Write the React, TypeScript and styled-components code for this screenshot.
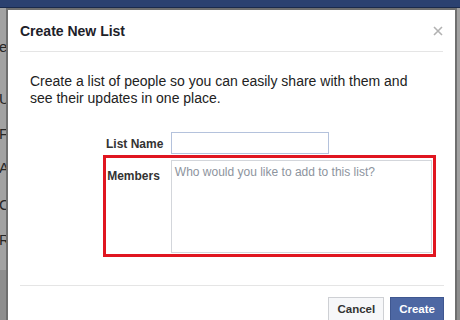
import React from 'react';
import styled, { createGlobalStyle } from 'styled-components';

const GlobalStyle = createGlobalStyle`
	html, body {
		margin: 0;
		padding: 0;
		background: #a2a2a2;
	}
	body {
		font-family: "Liberation Sans", Arial, sans-serif;
	}
`;

const Page = styled.div`
	position: relative;
	width: 460px;
	height: 320px;
	overflow: hidden;
	background: #a2a2a2;
`;

const TopBar = styled.div`
	height: 7px;
	background: #2b4170;
	border-bottom: 1px solid #1a2a4c;
`;

// the page behind the dialog: only the first letters of its menu peek out
const Sidebar = styled.ul`
	list-style: none;
	margin: 0;
	padding: 0;
	width: 7px;
	overflow: hidden;
	display: flex;
	flex-direction: column;
	font-size: 15px;
	color: #262626;
`;

const SideItem = styled.li<{ $offset: number }>`
	margin-top: ${props => props.$offset}px;
	margin-left: -1px;
	line-height: 16px;
	white-space: nowrap;
`;

const SideFooter = styled.div`
	margin-top: 22px;
	height: 60px;
	background: #8e8e8e;
`;

const Dialog = styled.div`
	position: absolute;
	left: 6px;
	top: 8px;
	width: 447px;
	height: 330px;
	background: #fff;
	border: 2px solid #6f6f6f;
	border-bottom: none;
	display: flex;
	flex-direction: column;
`;

const Header = styled.div`
	margin: 0 12px;
	height: 41px;
	display: flex;
	align-items: center;
	justify-content: space-between;
	border-bottom: 1px solid #e5e5e5;
`;

const Title = styled.h2`
	margin: 0;
	font-size: 14px;
	font-weight: bold;
	color: #1d2129;
`;

const CloseButton = styled.button`
	border: none;
	background: none;
	padding: 0;
	width: 10px;
	height: 10px;
	display: flex;
	cursor: pointer;
`;

const Body = styled.div`
	padding: 21px 22px 0 22px;
`;

const Intro = styled.p`
	margin: 0;
	font-size: 14px;
	line-height: 17px;
	color: #222;
`;

const Form = styled.div`
	margin-top: 25px;
	margin-left: 76px;
	display: flex;
	flex-direction: column;
	gap: 4px;
`;

const Row = styled.div<{ $highlight?: boolean }>`
	display: flex;
	align-items: flex-start;
	gap: 11px;
	padding: ${props => (props.$highlight ? '2px 1px 1px 0' : '0')};
	outline: ${props => (props.$highlight ? '3px solid #e01620' : 'none')};
`;

const Label = styled.label<{ $top: number }>`
	width: 54px;
	padding-top: ${props => props.$top}px;
	text-align: right;
	font-size: 12px;
	font-weight: bold;
	color: #333;
	white-space: nowrap;
`;

const TextInput = styled.input`
	box-sizing: border-box;
	width: 158px;
	height: 22px;
	border: 1px solid #b4c2dc;
	padding: 3px;
	font-family: inherit;
	font-size: 12px;
	outline: none;
`;

const MembersBox = styled.textarea`
	box-sizing: border-box;
	width: 262px;
	height: 93px;
	border: 1px solid #d3d6db;
	padding: 4px 3px;
	resize: none;
	font-family: inherit;
	font-size: 12px;
	color: #333;
	outline: none;
	&::placeholder {
		color: #8d949e;
	}
`;

const Footer = styled.div`
	margin: 31px 11px 0 12px;
	padding-top: 11px;
	border-top: 1px solid #e5e5e5;
	display: flex;
	justify-content: flex-end;
	gap: 6px;
`;

const Button = styled.button<{ $primary?: boolean }>`
	height: 24px;
	padding: 0 8px;
	font-family: inherit;
	font-size: 11.5px;
	font-weight: bold;
	border: 1px solid ${props => (props.$primary ? '#3f5790' : '#ced0d4')};
	background: ${props => (props.$primary ? '#4d67a3' : '#f6f7f9')};
	color: ${props => (props.$primary ? '#fff' : '#333')};
	cursor: pointer;
`;

const sideItems = [
	{ text: 'er', offset: 31 },
	{ text: 'Ur', offset: 36 },
	{ text: 'Fa', offset: 19 },
	{ text: 'Ac', offset: 18 },
	{ text: 'Cl', offset: 21 },
	{ text: 'Re', offset: 19 }
];

export default function App() {
	return (
		<Page>
			<GlobalStyle />
			<TopBar />
			<Sidebar>
				{sideItems.map(item => (
					<SideItem key={item.text} $offset={item.offset}>
						{item.text}
					</SideItem>
				))}
			</Sidebar>
			<SideFooter />
			<Dialog>
				<Header>
					<Title>Create New List</Title>
					<CloseButton aria-label='Close'>
						<svg width='10' height='10' viewBox='0 0 10 10'>
							<path d='M1 1 L9 9 M9 1 L1 9' stroke='#b2b2b2' strokeWidth='1.6' />
						</svg>
					</CloseButton>
				</Header>
				<Body>
					<Intro>
						Create a list of people so you can easily share with them and
						<br />
						see their updates in one place.
					</Intro>
					<Form>
						<Row>
							<Label $top={5}>List Name</Label>
							<TextInput type='text' />
						</Row>
						<Row $highlight>
							<Label $top={9}>Members</Label>
							<MembersBox placeholder='Who would you like to add to this list?' />
						</Row>
					</Form>
				</Body>
				<Footer>
					<Button>Cancel</Button>
					<Button $primary>Create</Button>
				</Footer>
			</Dialog>
		</Page>
	);
}
